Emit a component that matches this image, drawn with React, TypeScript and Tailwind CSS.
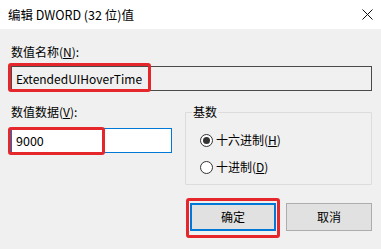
import React from "react";

const font = { fontFamily: '"Noto Sans CJK SC", "Noto Sans", sans-serif' };

export default function App() {
  return (
    <div
      className="relative w-[381px] h-[249px] bg-[#f0f0f0] text-[12px] leading-[16px] text-[#000] overflow-hidden"
      style={font}
    >
      {/* Title bar */}
      <div className="h-[29px] bg-white flex items-center justify-between pl-[8px] pr-[8px]">
        <span className="text-[12.5px]">编辑 DWORD (32 位)值</span>
        <svg width="11" height="11" viewBox="0 0 11 11" className="mr-[0px]">
          <path d="M0.5 0.5 L10.5 10.5 M10.5 0.5 L0.5 10.5" stroke="#111" strokeWidth="1" />
        </svg>
      </div>

      <div className="pl-[11px] pr-[9px]">
        <div className="mt-[15px] h-[16px]">
          数值名称(<span className="underline">N</span>):
        </div>
        <div className="mt-[6px] h-[25px] border border-[#4a4a4a] bg-[#f0f0f0] flex items-center pl-[4px] text-[12px]">
          ExtendedUIHoverTime
        </div>

        <div className="flex mt-[13px]">
          <div className="w-[161px]">
            <div className="h-[16px]">
              数值数据(<span className="underline">V</span>):
            </div>
            <div className="mt-[8px] h-[25px] border border-[#0078d7] bg-white flex items-center pl-[4px] text-[12.5px]">
              9000
            </div>
          </div>
          <div className="ml-[13px] flex-1 relative pt-[8px]">
            <div className="h-[73px] border border-[#dcdcdc] rounded-[1px] pl-[14px] pt-[19px]">
              <div className="flex items-center h-[16px]">
                <span className="w-[13px] h-[13px] rounded-full border border-[#333] bg-white flex items-center justify-center">
                  <span className="w-[7px] h-[7px] rounded-full bg-[#333]" />
                </span>
                <span className="ml-[3px]">
                  十六进制(<span className="underline">H</span>)
                </span>
              </div>
              <div className="flex items-center h-[16px] mt-[11px]">
                <span className="w-[13px] h-[13px] rounded-full border border-[#333] bg-white" />
                <span className="ml-[3px]">
                  十进制(<span className="underline">D</span>)
                </span>
              </div>
            </div>
            <div className="absolute left-[7px] top-0 px-[1px] bg-[#f0f0f0] h-[16px]">基数</div>
          </div>
        </div>

        <div className="flex justify-end mt-[18px] gap-[10px] pr-[0px]">
          <button className="w-[86px] h-[28px] border-2 border-[#0078d7] bg-[#e1e1e1] flex items-center justify-center">
            确定
          </button>
          <button className="w-[86px] h-[28px] border border-[#adadad] bg-[#e1e1e1] flex items-center justify-center">
            取消
          </button>
        </div>
      </div>

      {/* Red annotation boxes */}
      <div className="absolute left-[8px] top-[63px] w-[143px] h-[29px] border-[3px] border-[#e5262b] rounded-[3px]" />
      <div className="absolute left-[8px] top-[127px] w-[97px] h-[28px] border-[3px] border-[#e5262b] rounded-[3px]" />
      <div className="absolute left-[186px] top-[198px] w-[94px] h-[40px] border-[3px] border-[#e5262b] rounded-[3px]" />
    </div>
  );
}
